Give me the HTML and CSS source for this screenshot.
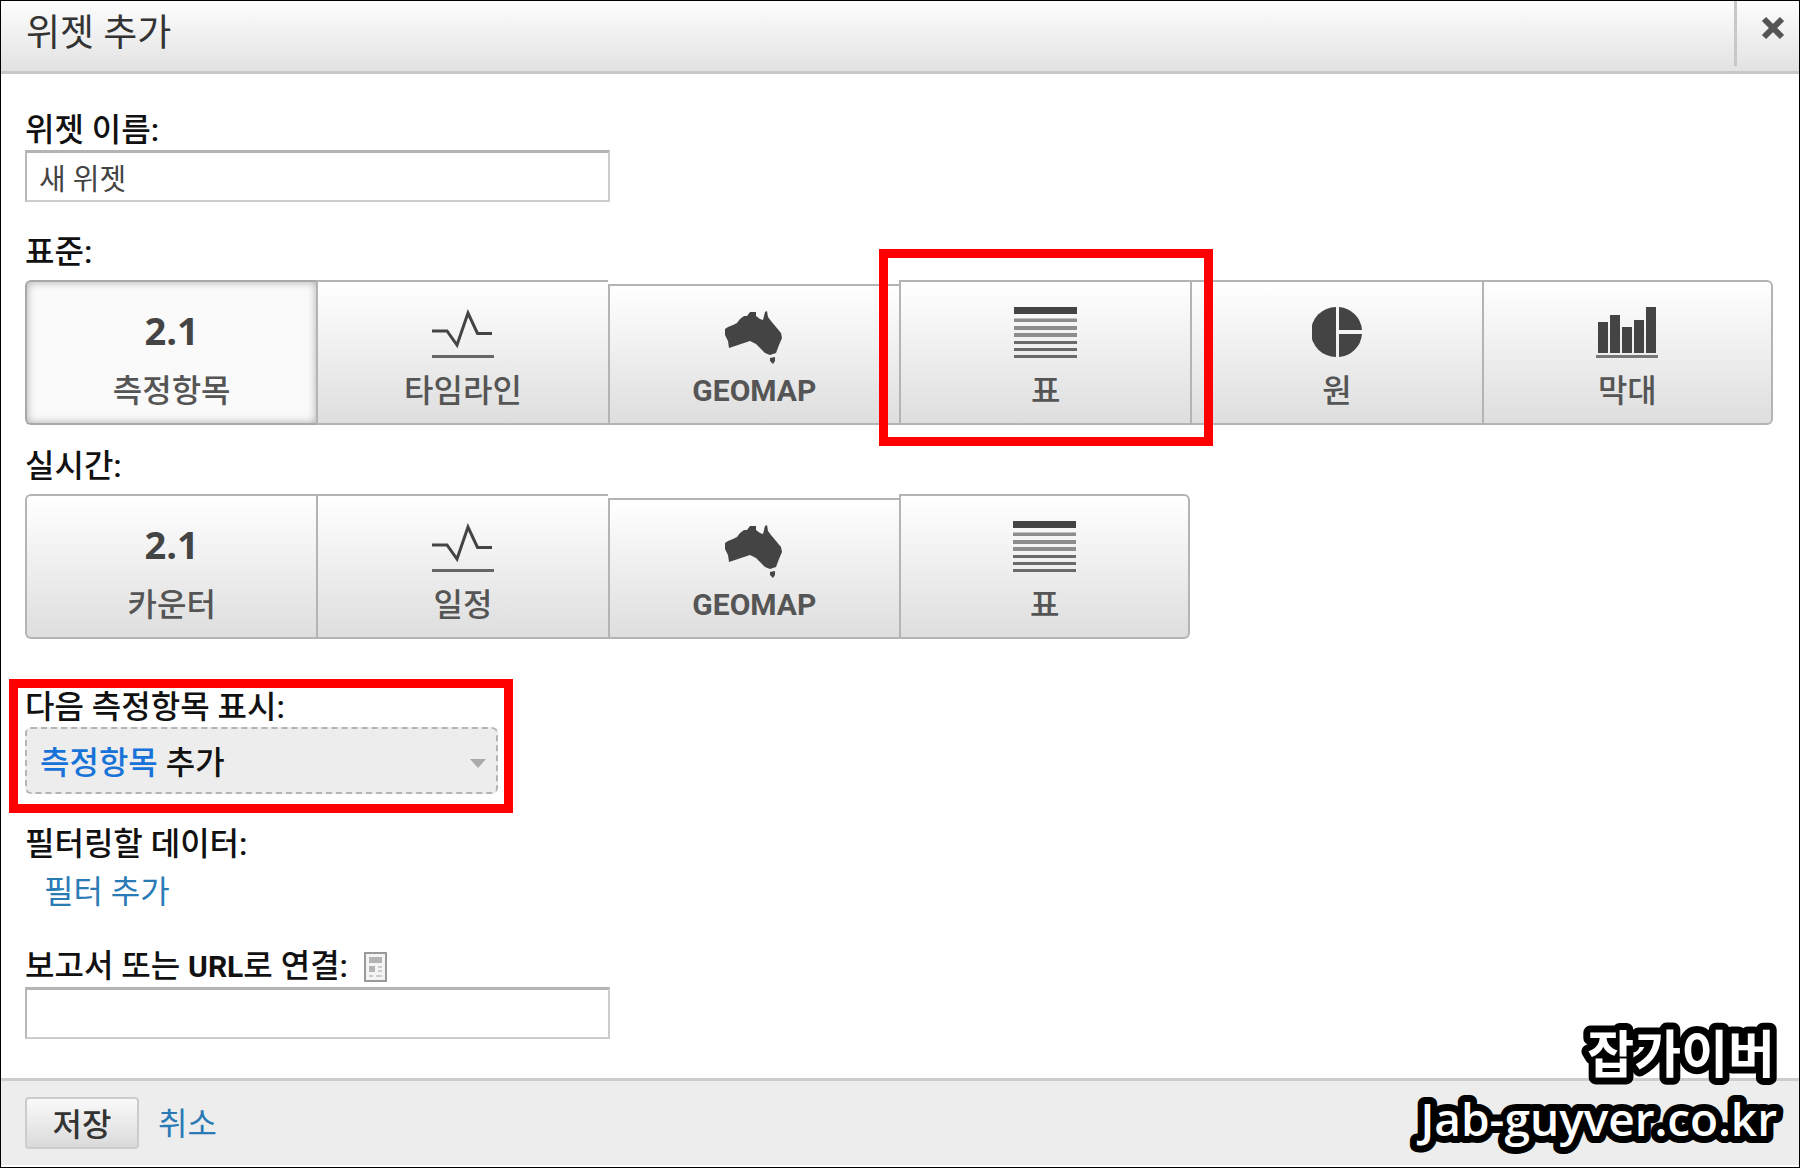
FILE: index.html
```html
<!DOCTYPE html>
<html lang="ko">
<head>
<meta charset="utf-8">
<meta name="viewport" content="width=device-width, initial-scale=1">
<title>위젯 추가</title>
<link rel="stylesheet" href="styles.css">
</head>
<body>
<svg class="sprite" aria-hidden="true">
  <symbol id="timeline" viewBox="0 0 64 52" preserveAspectRatio="xMidYMin">
    <path d="M1 24H16L26 38L37 6L46.500 26.500H61" fill="none" stroke="#444" stroke-width="3" stroke-miterlimit="10"/>
    <path d="M1 48H63V51H1Z" fill="#666"/>
  </symbol>
  <symbol id="geomap" viewBox="0 0 64 58" preserveAspectRatio="xMidYMin">
    <path d="M3 22L6 20L11 18L15 16L18 12L22 9L25 9L28 5L34 5L34 9L38 12L41 13L43 5L45 4L46 10L49 14L54 20L59 26L60 31L57 38L54 46L48 48L43 46L38 41L34 37L28 34L22 36L16 38L7 41L6 34L3 28Z"/>
    <path d="M48 51L53 50L53 54L51 57L48 54Z"/>
  </symbol>
  <symbol id="table" viewBox="0 0 64 52" preserveAspectRatio="xMidYMin">
    <path d="M0 0H63V7H0Z"/>
    <path d="M0 11.500H63V15H0ZM0 19H63V23H0ZM0 26H63V30H0Z" fill="#8d8d8d"/>
    <path d="M0 34H63V37H0ZM0 41H63V44H0ZM0 48H63V51H0Z" fill="#6a6a6a"/>
  </symbol>
  <symbol id="pie" viewBox="0 0 50 52" preserveAspectRatio="xMidYMin">
    <path d="M24 0A25 25 0 0 0 24 50Z"/>
    <path d="M27 0A25 25 0 0 1 50 23H27ZM27 27H50A25 25 0 0 1 27 50Z"/>
  </symbol>
  <symbol id="bars" viewBox="0 0 64 52" preserveAspectRatio="xMidYMin">
    <path d="M3 15H13V46H3ZM15 8H25V46H15ZM27 20H37V46H27ZM39 13H49V46H39ZM51 0H61V46H51Z"/>
    <path d="M1 48H63V51H1Z" fill="#777"/>
  </symbol>
</svg>

<form class="dialog">
  <header class="dialog-header">
    <h1 class="dialog-title">위젯 추가</h1>
    <button class="close" type="button" aria-label="닫기">
      <svg width="24" height="24" viewBox="0 0 24 24"><path d="M3 3L21 21M21 3L3 21" stroke="#555" stroke-width="6"/></svg>
    </button>
  </header>

  <main class="dialog-body">
    <div class="field">
      <label class="label" for="widget-name">위젯 이름:</label>
      <input class="text-input" id="widget-name" type="text" value="새 위젯">
    </div>

    <section class="type-group">
      <h2 class="label" id="standard">표준:</h2>
      <div class="types" role="group" aria-labelledby="standard">
        <button class="type selected" type="button" aria-pressed="true"><span class="number">2.1</span><span class="name">측정항목</span></button>
        <button class="type" type="button"><svg class="icon" width="64"><use href="#timeline"/></svg><span class="name">타임라인</span></button>
        <button class="type lowered" type="button"><svg class="icon" width="64"><use href="#geomap"/></svg><span class="name latin">GEOMAP</span></button>
        <button class="type" type="button"><svg class="icon" width="64"><use href="#table"/></svg><span class="name">표</span><span class="highlight"></span></button>
        <button class="type" type="button"><svg class="icon" width="50"><use href="#pie"/></svg><span class="name">원</span></button>
        <button class="type" type="button"><svg class="icon" width="64"><use href="#bars"/></svg><span class="name">막대</span></button>
      </div>
    </section>

    <section class="type-group">
      <h2 class="label" id="realtime">실시간:</h2>
      <div class="types" role="group" aria-labelledby="realtime">
        <button class="type" type="button"><span class="number">2.1</span><span class="name">카운터</span></button>
        <button class="type" type="button"><svg class="icon" width="64"><use href="#timeline"/></svg><span class="name">일정</span></button>
        <button class="type lowered" type="button"><svg class="icon" width="64"><use href="#geomap"/></svg><span class="name latin">GEOMAP</span></button>
        <button class="type" type="button"><svg class="icon" width="64"><use href="#table"/></svg><span class="name">표</span></button>
      </div>
    </section>

    <section class="metric">
      <h2 class="label" id="metric">다음 측정항목 표시:</h2>
      <button class="metric-picker" type="button" aria-describedby="metric">
        <span><span class="metric-kind">측정항목</span> 추가</span>
        <svg width="16" height="9" viewBox="0 0 16 9"><path d="M0 0H16L8 9Z" fill="#aaa"/></svg>
      </button>
      <span class="highlight"></span>
    </section>

    <section class="filter">
      <h2 class="label">필터링할 데이터:</h2>
      <a class="link filter-link" href="#">필터 추가</a>
    </section>

    <div class="field">
      <div class="label-row">
        <label class="label" for="report-url">보고서 또는 <span class="latin">URL</span>로 연결:</label>
        <svg width="24" height="30" viewBox="0 0 24 30">
          <path d="M1 1H22V29H1Z" fill="#f4f4f4" stroke="#999" stroke-width="2"/>
          <path d="M5 5H18V11H5ZM5 14H11V20H5Z" fill="#b4b4b4"/>
          <path d="M14 14H18V16H14ZM14 18H18V20H14ZM5 23H9V25H5ZM12 23H18V25H12Z" fill="#ccc"/>
        </svg>
      </div>
      <input class="text-input" id="report-url" type="text">
    </div>
  </main>

  <footer class="dialog-footer">
    <button class="save" type="submit">저장</button>
    <a class="link" href="#">취소</a>
  </footer>

  <svg class="watermark" width="400" height="140">
    <text class="brand" x="376" y="52">잡가이버</text>
    <text class="site" x="378" y="115">Jab-guyver.co.kr</text>
  </svg>
</form>
</body>
</html>
```
FILE: styles.css
```css
* {
  box-sizing: border-box;
}

body,
h1,
h2 {
  margin: 0;
}

body,
button,
input {
  font-family: Roboto, "Noto Sans CJK KR", sans-serif;
}

body {
  font-size: 32px;
  line-height: 40px;
  color: #222;
  background: #fff;
}

button {
  cursor: pointer;
}

.sprite {
  display: none;
}

.dialog {
  position: relative;
  display: flex;
  flex-direction: column;
  min-height: 100vh;
  padding-bottom: 2px;
  border: 1px solid #000;
}

/* Header */
.dialog-header {
  display: flex;
  justify-content: space-between;
  height: 73px;
  border-bottom: 3px solid #c8c8c8;
  background: linear-gradient(#fdfdfd, #e2e2e2);
}

.dialog-title {
  padding: 11px 25px;
  font-size: 37px;
  font-weight: 400;
  line-height: 44px;
  color: #333;
}

.close {
  display: flex;
  width: 65px;
  height: 65px;
  padding: 15px 0 0 24px;
  border: 0;
  border-left: 3px solid #c8c8c8;
  background: none;
}

/* Form */
.dialog-body {
  padding: 36px 26px 39px 24px;
}

.label {
  display: block;
  font-size: 32px;
  font-weight: 500;
  line-height: 40px;
  color: #111;
}

.latin {
  font-size: 30px;
  font-weight: 700;
}

.label-row {
  display: flex;
  align-items: center;
  gap: 16px;
}

.text-input {
  display: block;
  width: 585px;
  max-width: 100%;
  height: 52px;
  padding: 0 12px;
  border: 2px solid #ccc;
  border-top: 3px solid #b4b4b4;
  border-left-color: #b8b8b8;
  font-size: 29px;
  color: #444;
  background: #fff;
}

.type-group {
  margin-top: 21px;
}

.field + .type-group {
  margin-top: 30px;
}

/* Widget type buttons */
.types {
  display: grid;
  grid-template-columns: repeat(6, 1fr);
  margin-top: 8px;
}

.type {
  position: relative;
  display: flex;
  flex-direction: column;
  align-items: center;
  justify-content: flex-end;
  height: 145px;
  padding: 0 0 12px;
  border: 2px solid #b4b4b4;
  border-right: 0;
  background: linear-gradient(#fff, #dedede);
  color: #555;
}

.type:first-child {
  border-radius: 6px 0 0 6px;
}

.type:last-child {
  border-right: 2px solid #b4b4b4;
  border-radius: 0 6px 6px 0;
}

.type.lowered {
  height: 141px;
  margin-top: 4px;
}

.type.selected {
  border-color: #a8a8a8;
  background: #fafafa;
  box-shadow: inset 0 0 8px #aaa;
}

.icon {
  height: 64px;
  fill: #444;
}

.number {
  font-family: "Open Sans", sans-serif;
  font-size: 38px;
  font-weight: 700;
  line-height: 48px;
  margin-bottom: 17px;
  color: #444;
}

.name {
  font-size: 32px;
  font-weight: 500;
  line-height: 40px;
}

.name.latin {
  font-size: 30px;
  font-weight: 700;
}

/* Red callout frames */
.highlight {
  position: absolute;
  z-index: 1;
  inset: -33px -23px -23px -22px;
  border: 9px solid #f00;
  pointer-events: none;
}

/* Metric picker */
.metric {
  position: relative;
  width: 473px;
  max-width: 100%;
  margin-top: 48px;
}

.metric .highlight {
  inset: -8px -15px -19px -16px;
}

.metric-picker {
  display: flex;
  align-items: center;
  justify-content: space-between;
  width: 100%;
  height: 67px;
  padding: 5px 10px 0 13px;
  border: 2px dashed #b4b4b4;
  border-radius: 6px;
  font-size: 32px;
  font-weight: 500;
  line-height: 40px;
  color: #111;
  background: #ededed;
}

.metric-kind {
  color: #1873d9;
}

/* Filter */
.filter {
  margin: 30px 0 34px;
}

.link {
  color: #2a7ab5;
  text-decoration: none;
}

.filter-link {
  display: block;
  width: max-content;
  margin: 8px 0 0 19px;
}

/* Footer */
.dialog-footer {
  display: flex;
  flex: 1;
  align-items: flex-start;
  gap: 19px;
  padding: 16px 24px;
  border-top: 3px solid #ccc;
  background: #ededed;
}

.save {
  width: 114px;
  height: 52px;
  padding: 4px 0 0;
  border: 2px solid #ccc;
  border-radius: 4px;
  font-size: 32px;
  font-weight: 500;
  line-height: 40px;
  color: #333;
  background: linear-gradient(#fafafa, #dadada);
}

.dialog-footer .link {
  padding-top: 7px;
}

/* Watermark */
.watermark {
  position: absolute;
  right: 0;
  bottom: 6px;
  fill: #fff;
  stroke: #000;
  stroke-width: 14px;
  stroke-linejoin: round;
  paint-order: stroke fill;
  text-anchor: end;
  pointer-events: none;
}

.brand {
  font-size: 51px;
  font-weight: 700;
}

.site {
  font-family: "Open Sans", sans-serif;
  font-size: 46px;
  font-weight: 600;
}
```
